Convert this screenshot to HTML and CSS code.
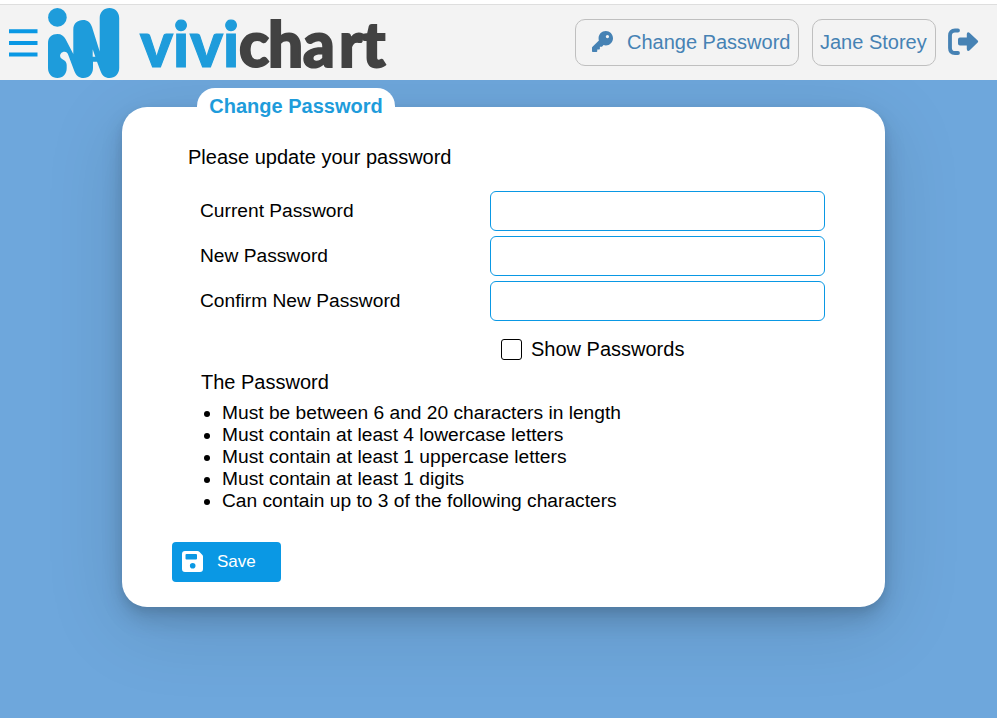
FILE: index.html
```html
<!DOCTYPE html>
<html lang="en">
<head>
<meta charset="utf-8">
<title>Change Password</title>
<link rel="stylesheet" href="styles.css">
</head>
<body>
<header class="topbar">
  <svg class="menu" viewBox="0 0 29 28"><path d="M0 2.2h28.500M0 14h28.500M0 25.500h28.500" stroke="#0a98e4" stroke-width="4"/></svg>
  <svg class="mark" viewBox="0 0 72 70" fill="#1e9cdb">
    <circle cx="9.4" cy="9.4" r="9.3"/>
    <path d="M0 35C0 29 4.200 26 9.400 26C13.500 26 15.800 28 17.500 31L25.300 46V21.500C25.300 15.500 29.500 12 35 12C39.500 12 42.500 14.500 44 19L51.700 43.500V10C51.700 4 56 0 61.500 0C67 0 71.200 4 71.200 10V60C71.200 66 67 70 61.500 70C57 70 54 67.500 52.500 63L49 53.700H45V60C45 66 41 70 35.500 70C31 70 28 67.500 26.300 63L20.300 47C19.500 44.800 18.300 43.700 16.500 43.700C13.700 43.700 11.700 46 12.200 48.500C12.800 52 18.700 51.500 18.700 57V60C18.700 66 15 70 9.400 70C4 70 0 66 0 60Z"/>
    <path d="M44.700 41.300L47.300 48.700H44.700Z" fill="#f3f3f3"/>
  </svg>
  <svg class="wordmark" viewBox="0 0 270 70">
    <text class="vivi" x="1 34 51 84" y="55">vivi</text>
    <text class="chart" x="100 129 164 200 223" y="55">chart</text>
  </svg>
  <a class="pill pill-key">
    <svg class="key" viewBox="0 0 512 512"><path fill="currentColor" d="M336 352c97.200 0 176-78.800 176-176S433.200 0 336 0S160 78.800 160 176c0 18.700 2.900 36.800 8.300 53.700L7 391c-4.500 4.500-7 10.600-7 17v80c0 13.300 10.700 24 24 24h80c13.300 0 24-10.700 24-24v-40h40c13.300 0 24-10.700 24-24v-40h40c6.400 0 12.500-2.500 17-7l33.300-33.300c16.900 5.400 35 8.300 53.700 8.300zM376 96a40 40 0 1 1 0 80 40 40 0 1 1 0-80z"/></svg>
    <span>Change Password</span>
  </a>
  <a class="pill pill-user">Jane Storey</a>
  <svg class="logout" viewBox="0 0 31 27"><path d="M10 2.500H7Q2 2.500 2 7.500V20Q2 25 7 25H10" fill="none" stroke="currentColor" stroke-width="3.800" stroke-linecap="round"/><path fill="currentColor" d="M12 9.500H18.800V6Q18.800 4.200 20.200 4.200Q21 4.200 21.700 4.900L29.700 12.400Q30.700 13.500 29.700 14.600L21.700 22.200Q21 22.900 20.200 22.900Q18.800 22.900 18.800 21V17.500H12Q10 17.500 10 15.500V11.500Q10 9.500 12 9.500Z"/></svg>
</header>
<main class="page">
  <section class="card">
    <h1 class="tab">Change Password</h1>
    <p class="intro">Please update your password</p>
    <form class="fields">
      <label for="current">Current Password</label><input id="current" type="password">
      <label for="new">New Password</label><input id="new" type="password">
      <label for="confirm">Confirm New Password</label><input id="confirm" type="password">
    </form>
    <label class="show"><input type="checkbox"><span>Show Passwords</span></label>
    <p class="rules-title">The Password</p>
    <ul class="rules">
      <li>Must be between 6 and 20 characters in length</li>
      <li>Must contain at least 4 lowercase letters</li>
      <li>Must contain at least 1 uppercase letters</li>
      <li>Must contain at least 1 digits</li>
      <li>Can contain up to 3 of the following characters</li>
    </ul>
    <button class="save" type="button">
      <svg viewBox="0 0 21 21"><path fill="#fff" fill-rule="evenodd" d="M3 0H15.500Q16.500 0 17.300.8L20.200 3.700Q21 4.500 21 5.500V18Q21 21 18 21H3Q0 21 0 18V3Q0 0 3 0ZM4.500 3Q3.500 3 3.500 4V7.500Q3.500 8.500 4.500 8.500H14Q15 8.500 15 7.500V4Q15 3 14 3ZM10.700 12A2.800 2.800 0 1 0 10.700 17.600A2.800 2.800 0 1 0 10.700 12Z"/></svg>
      <span>Save</span>
    </button>
  </section>
</main>
</body>
</html>
```
FILE: styles.css
```css
* { box-sizing: border-box; }
body {
  margin: 0;
  height: 718px;
  overflow: hidden;
  display: flex;
  flex-direction: column;
  background: #6ea7dc;
  color: #000;
  font: 20px/24px "Liberation Sans", Arial, sans-serif;
}
.topbar {
  position: relative;
  z-index: 1;
  flex: none;
  height: 80px;
  display: flex;
  align-items: flex-start;
  background: #f3f3f3;
  border-top: 4px solid #fff;
  box-shadow: inset 0 1px #dedede;
  color: #4682b4;
}
.menu { width: 29px; height: 28px; margin: 25px 0 0 9px; }
.mark { width: 72px; height: 70px; margin: 4px 0 0 10px; }
.wordmark { width: 270px; height: 70px; margin: 8px 0 0 19px; overflow: visible; }
.wordmark text { font: 900 62px Lato, sans-serif; stroke-width: 1.2px; }
.vivi { fill: #1e9cdb; stroke: #1e9cdb; }
.wordmark .chart { fill: #424242; stroke: #424242; stroke-width: 2px; }
.pill {
  height: 47px;
  margin-top: 15px;
  padding-bottom: 2px;
  display: flex;
  align-items: center;
  border: 1px solid #bfbfbf;
  border-radius: 10px;
  white-space: nowrap;
}
.pill-key { width: 224px; margin-left: auto; padding-left: 16px; gap: 14px; }
.pill-user { width: 124px; margin-left: 13px; padding-left: 7px; }
.key { width: 21px; height: 21px; }
.logout { width: 31px; height: 27px; margin: 24px 18px 0 12px; }
.page { flex: 1; padding: 27px 0 0 122px; }
.card {
  width: 763px;
  height: 500px;
  display: flex;
  flex-direction: column;
  align-items: flex-start;
  background: #fff;
  border-radius: 25px;
  box-shadow: 0 4px 8px rgba(0,0,0,.08), 0 12px 22px rgba(0,0,0,.14), 0 18px 80px rgba(0,0,0,.13);
}
.tab {
  width: 198px;
  height: 36px;
  margin: -19px 0 0 75px;
  text-align: center;
  font-size: 20px;
  line-height: 36px;
  color: #1e9cdb;
  background: #fff;
  border-radius: 18px 18px 0 0;
}
.intro { margin: 21px 0 0 66px; }
.fields {
  display: grid;
  grid-template-columns: 290px 335px;
  grid-auto-rows: 40px;
  row-gap: 5px;
  margin: 22px 0 0 78px;
  font-size: 19.2px;
  line-height: 40px;
}
.fields input {
  width: 335px;
  height: 40px;
  padding: 0 10px;
  background: #fff;
  border: 1px solid #0a98e4;
  border-radius: 6px;
}
.show { display: flex; align-items: center; gap: 9px; height: 24px; margin: 16px 0 0 379px; }
.show input {
  appearance: none;
  width: 21px;
  height: 21px;
  margin: 0;
  border: 1px solid #000;
  border-radius: 3px;
}
.rules-title { margin: 9px 0 0 79px; }
.rules { margin: 8px 0 0 100px; padding: 0; font-size: 19.2px; line-height: 22px; }
.save {
  display: flex;
  align-items: center;
  gap: 14px;
  width: 109px;
  height: 40px;
  margin: 30px 0 0 50px;
  padding: 0 0 1px 10px;
  border: 0;
  border-radius: 4px;
  background: #0a98e4;
  color: #fff;
  font: 17px "Liberation Sans", Arial, sans-serif;
}
.save svg { width: 21px; height: 21px; }
```
